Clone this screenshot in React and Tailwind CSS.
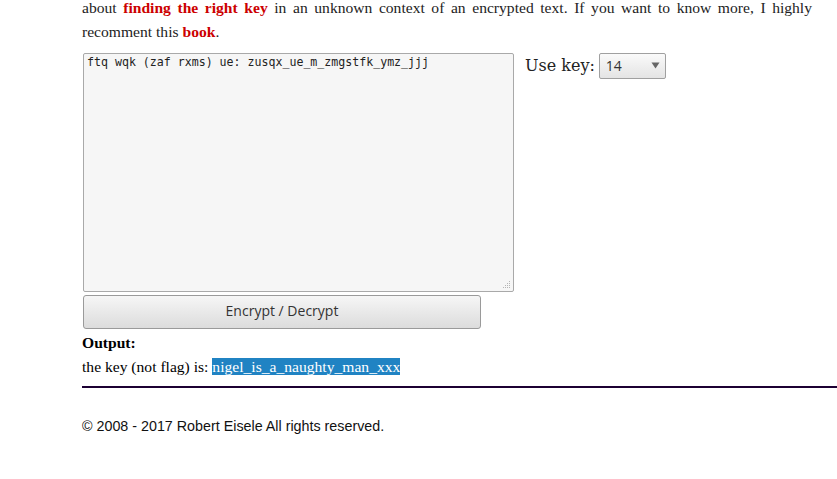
export default function App() {
  return (
    <div className="min-h-[479px] bg-white font-['Liberation_Serif',serif] text-[15.6px] text-black">
      <div className="pl-[82px] pr-[25px]">
        <p className="-mt-[4px] text-justify leading-[24px] text-[#222]">
          about <a className="font-bold text-[#cc0000]">finding the right key</a> in an unknown context of an encrypted text. If you want to know more, I highly recomment this{" "}
          <a className="font-bold text-[#cc0000]">book</a>.
        </p>

        <div className="mt-[9px] flex items-start gap-[11px]">
          <div className="flex flex-col">
            <div className="relative ml-[1px] h-[239px] w-[431px] rounded-[2px] border border-[#a9a9a9] bg-[#f6f6f6] px-[3px] pt-[1px] font-['DejaVu_Sans_Mono',monospace] text-[11.6px] leading-[15px] text-[#222]">
              ftq wqk (zaf rxms) ue: zusqx_ue_m_zmgstfk_ymz_jjj
              <svg className="absolute bottom-[2px] right-[2px]" width="9" height="9" viewBox="0 0 9 9">
                <g fill="#b5b5b5">
                  <rect x="7" y="1" width="1" height="1" />
                  <rect x="5" y="3" width="1" height="1" />
                  <rect x="7" y="3" width="1" height="1" />
                  <rect x="3" y="5" width="1" height="1" />
                  <rect x="5" y="5" width="1" height="1" />
                  <rect x="7" y="5" width="1" height="1" />
                  <rect x="1" y="7" width="1" height="1" />
                  <rect x="3" y="7" width="1" height="1" />
                  <rect x="5" y="7" width="1" height="1" />
                  <rect x="7" y="7" width="1" height="1" />
                </g>
              </svg>
            </div>
            <button className="ml-[1px] mt-[3px] h-[34px] w-[398px] rounded-[3px] border border-[#9a9a9a] bg-gradient-to-b from-[#f6f6f6] to-[#dcdcdc] pb-[3px] font-['Open_Sans',sans-serif] text-[14px] text-[#333]">
              Encrypt / Decrypt
            </button>
          </div>
          <div className="flex items-center gap-[4px]">
            <span className="font-['DejaVu_Serif',serif] text-[16px] text-[#222]">Use key:</span>
            <div className="flex h-[26px] w-[67px] items-center justify-between rounded-[2px] border border-[#a0a0a0] bg-gradient-to-b from-[#fafafa] to-[#e4e4e4] pb-[1px] pl-[6px] pr-[5px] font-['Open_Sans',sans-serif] text-[14px] text-[#333]">
              <span>14</span>
              <svg width="9" height="7" viewBox="0 0 9 7">
                <path d="M0.5 0.5 L8.5 0.5 L4.5 6.5 Z" fill="#666" />
              </svg>
            </div>
          </div>
        </div>

        <div className="mt-[2px] font-bold leading-[24px]">Output:</div>
        <div className="leading-[24px]">
          the key (not flag) is:{" "}
          <span className="bg-[#2083c3] text-white">nigel_is_a_naughty_man_xxx</span>
        </div>
      </div>

      <div className="ml-[82px] mt-[7px] h-[2px] bg-[#1c0033]" />

      <div className="pl-[82px] pt-[28px] font-['Liberation_Sans',sans-serif] text-[14.3px] text-[#111]">
        © 2008 - 2017 Robert Eisele All rights reserved.
      </div>
    </div>
  );
}
